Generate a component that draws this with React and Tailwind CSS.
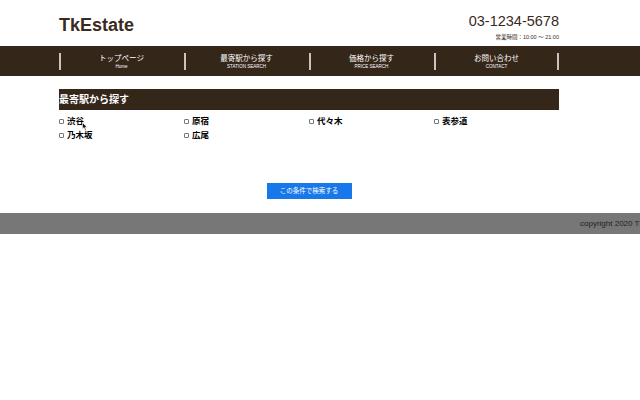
const navItems = [
  { ja: "トップページ", en: "Home" },
  { ja: "最寄駅から探す", en: "STATION SEARCH" },
  { ja: "価格から探す", en: "PRICE SEARCH" },
  { ja: "お問い合わせ", en: "CONTACT" },
];

const stations = ["渋谷", "原宿", "代々木", "表参道", "乃木坂", "広尾"];

export default function App() {
  return (
    <div
      className="relative w-[640px] h-[400px] bg-white overflow-hidden text-[#3a2a1e]"
      style={{ fontFamily: '"Liberation Sans", Arial, "Noto Sans CJK JP", sans-serif' }}
    >
      {/* header */}
      <header className="w-[500px] ml-[59px] h-[46px] flex justify-between items-start">
        <h1 className="mt-[15px] text-[18px] leading-[20px] font-bold">TkEstate</h1>
        <div className="flex flex-col items-end">
          <p className="mt-[13px] text-[14.5px] leading-[17px] font-normal">03-1234-5678</p>
          <p className="mt-[4px] text-[5.5px] leading-[6px]">営業時間：10:00 ～ 21:00</p>
        </div>
      </header>

      {/* nav */}
      <nav className="bg-[#35261a] h-[30px]">
        <ul className="w-[500px] ml-[59px] h-full grid grid-cols-4">
          {navItems.map((n, i) => (
            <li key={n.en} className="relative flex flex-col items-center justify-center text-white">
              <span className="absolute left-0 top-[7px] h-[17px] w-[2px] bg-[#c9c4bf]" />
              {i === navItems.length - 1 && (
                <span className="absolute right-0 top-[7px] h-[17px] w-[2px] bg-[#c9c4bf]" />
              )}
              <span className="text-[7.5px] leading-[9px] mt-[1px]">{n.ja}</span>
              <span className="text-[4.5px] leading-[6px] mt-[1px]">{n.en}</span>
            </li>
          ))}
        </ul>
      </nav>

      {/* search */}
      <main className="w-[500px] ml-[59px] pt-[13px]">
        <h2 className="bg-[#35261a] text-white text-[10px] font-bold h-[21px] flex items-center">
          最寄駅から探す
        </h2>
        <div className="grid grid-cols-4 mt-[6px] gap-y-[4px]">
          {stations.map((s) => (
            <label key={s} className="flex items-center gap-[3px] h-[10px] text-[8.5px] font-bold text-black">
              <span className="w-[5px] h-[5px] border border-[#777] rounded-[1px] bg-white" />
              {s}
            </label>
          ))}
        </div>
        <div className="flex justify-center mt-[43px]">
          <button className="w-[85px] h-[16px] bg-[#1878ea] text-white text-[6.5px] leading-[16px]">
            この条件で検索する
          </button>
        </div>
      </main>

      {/* footer */}
      <footer className="mt-[14px] h-[21px] bg-[#777777] flex items-center whitespace-nowrap">
        <p className="pl-[580px] text-[8px] text-[#222]">copyright 2020 TkEstate</p>
      </footer>

      {/* mouse pointer */}
      <svg className="absolute left-[82px] top-[122px]" width="6" height="9" viewBox="0 0 6 9">
        <path d="M0.5 0.5 L0.5 7 L2 5.6 L3.2 8.3 L4.2 7.9 L3 5.3 L5 5.2 Z" fill="#111" stroke="#fff" strokeWidth="0.6" />
      </svg>
    </div>
  );
}
